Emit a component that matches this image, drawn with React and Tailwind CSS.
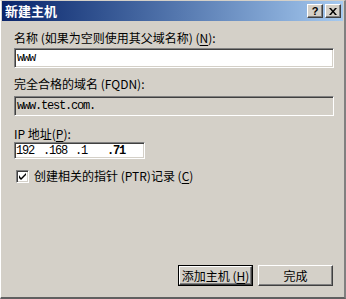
import React from "react";

const font = { fontFamily: '"Noto Sans CJK SC", "Liberation Sans", sans-serif' };
const mono = { fontFamily: '"Liberation Mono", "DejaVu Sans Mono", monospace' };

const sunken =
  "border border-t-[#808080] border-l-[#808080] border-r-white border-b-white shadow-[inset_1px_1px_#404040,inset_-1px_-1px_#d4d0c8]";
const raised =
  "border border-t-white border-l-white border-r-[#404040] border-b-[#404040] shadow-[inset_-1px_-1px_#808080]";

function U({ children }) {
  return <span className="underline underline-offset-2">{children}</span>;
}

export default function App() {
  return (
    <div
      className="w-[346px] h-[299px] bg-[#d4d0c8] border-l border-t border-l-white border-t-[#d4d0c8] border-r-2 border-b-2 border-r-[#808080] border-b-[#606060] flex flex-col overflow-hidden text-black"
      style={font}
    >
      {/* title bar */}
      <div className="mx-px h-[20px] bg-gradient-to-r from-[#0a246a] to-[#a6caf0] flex items-center pl-[3px] pr-[2px]">
        <span className="text-white font-bold text-[13px] leading-[20px]">新建主机</span>
        <div className="ml-auto flex gap-[2px]">
          <div className={`w-[16px] h-[14px] bg-[#d4d0c8] ${raised} flex items-center justify-center`}>
            <span className="text-[11px] font-bold leading-none" style={{ fontFamily: '"Liberation Sans", sans-serif' }}>?</span>
          </div>
          <div className={`w-[16px] h-[14px] bg-[#d4d0c8] ${raised} flex items-center justify-center`}>
            <svg width="8" height="7" viewBox="0 0 8 7">
              <path d="M0 0h2l2 2.5L6 0h2L5 3.5 8 7H6L4 4.5 2 7H0l3-3.5z" fill="#000" />
            </svg>
          </div>
        </div>
      </div>

      <div className="flex flex-col pl-[13px] pr-[11px] text-[12px] leading-[14px]">
        <div className="mt-[10px] h-[14px] whitespace-nowrap">
          名称 (如果为空则使用其父域名称) (<U>N</U>):
        </div>
        <div className={`mt-[3px] h-[20px] w-[320px] bg-white ${sunken} flex items-center pl-[2px]`}>
          <span className="text-[12px] tracking-[-1.2px]" style={mono}>www</span>
        </div>

        <div className="mt-[9px] h-[14px] whitespace-nowrap">完全合格的域名 (FQDN):</div>
        <div className={`mt-[5px] h-[20px] w-[320px] bg-[#d4d0c8] ${sunken} flex items-center pl-[2px]`}>
          <span className="text-[12px] tracking-[-1.2px]" style={mono}>www.test.com.</span>
        </div>

        <div className="mt-[11px] h-[14px] whitespace-nowrap">
          IP 地址(<U>P</U>):
        </div>
        <div className={`mt-[1px] h-[17px] w-[131px] bg-white ${sunken} flex items-center pl-[1px] text-[12px] tracking-[-1.2px]`} style={mono}>
          <span className="w-[27px]">192</span>
          <span className="w-[32px]">.168</span>
          <span className="w-[32px]">.1</span>
          <span className="w-[32px] font-bold">.71</span>
        </div>

        <div className="mt-[10px] flex items-center gap-[5px] pl-[2px]">
          <div className={`w-[13px] h-[13px] bg-white ${sunken} flex items-center justify-center`}>
            <svg width="7" height="7" viewBox="0 0 7 7">
              <path d="M0 2v3l2 2 5-5V-0L2 5z" fill="#000" />
            </svg>
          </div>
          <span className="whitespace-nowrap">
            创建相关的指针 (PTR)记录 (<U>C</U>)
          </span>
        </div>
      </div>

      <div className="mt-auto mb-[11px] flex justify-end gap-[5px] pr-[11px] text-[12px]">
        <div className="w-[75px] h-[21px] border border-black">
          <div className={`w-full h-full ${raised} flex items-center justify-center whitespace-nowrap`}>
            添加主机 (<U>H</U>)
          </div>
        </div>
        <div className={`w-[75px] h-[21px] ${raised} flex items-center justify-center`}>完成</div>
      </div>
    </div>
  );
}
